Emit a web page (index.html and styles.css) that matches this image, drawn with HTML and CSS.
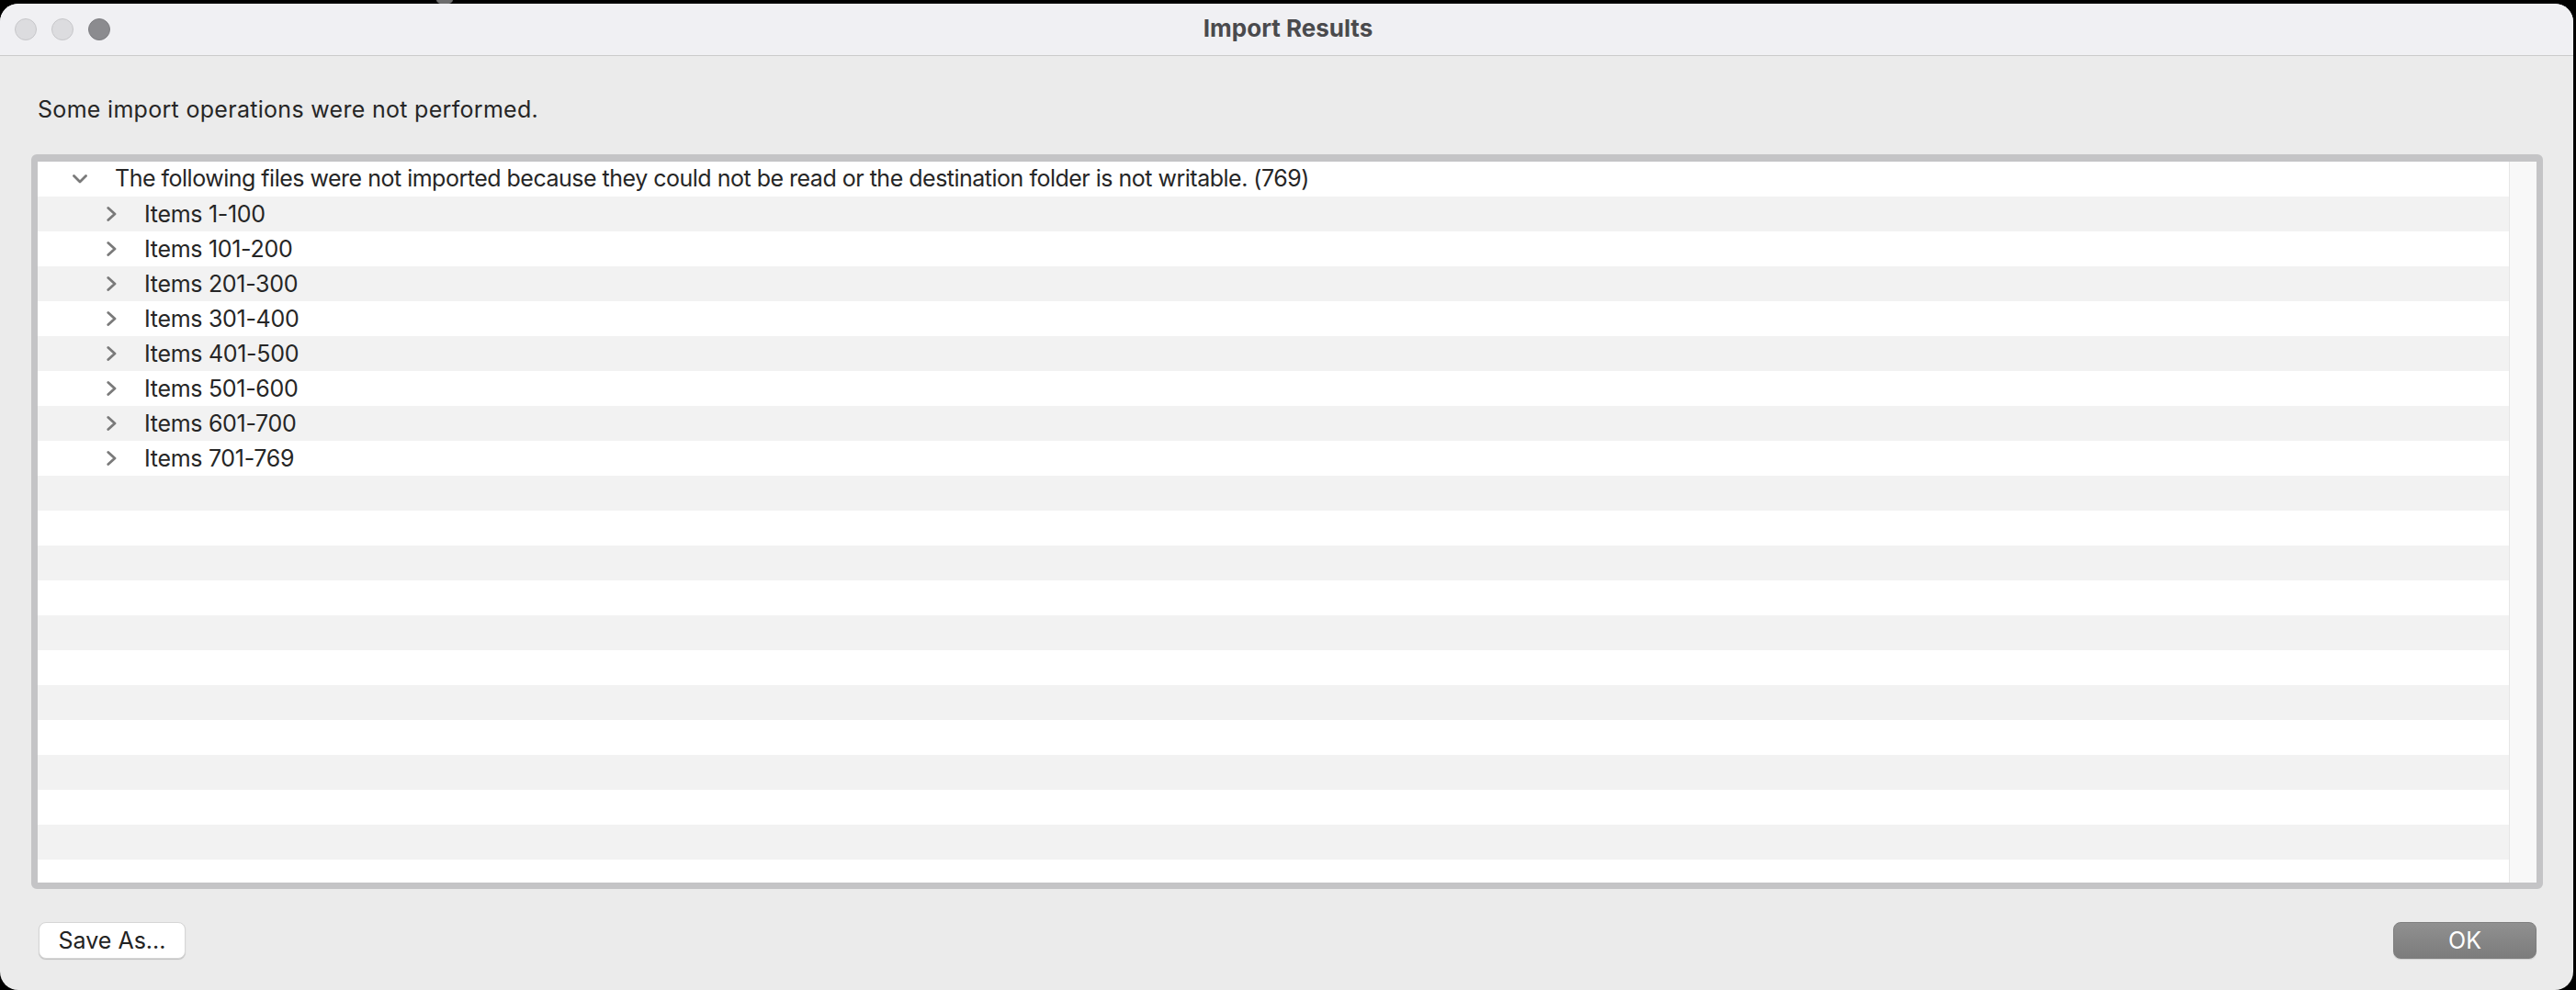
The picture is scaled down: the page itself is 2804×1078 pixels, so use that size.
FILE: index.html
```html
<!DOCTYPE html>
<html lang="en">
<head>
<meta charset="utf-8">
<title>Import Results</title>
<link rel="stylesheet" href="styles.css">
</head>
<body>
<span class="bump"></span>
<div class="window">
  <header class="titlebar">
    <div class="lights">
      <span class="light light-off"></span>
      <span class="light light-off"></span>
      <span class="light light-dark"></span>
    </div>
    <div class="title">Import Results</div>
  </header>
  <main class="content">
    <p class="message">Some import operations were not performed.</p>
    <div class="listbox">
      <div class="rows">
        <div class="row header-row">
          <svg class="chev-down" width="16" height="10" viewBox="0 0 16 10"><path d="M1.5 1.5 L8 8 L14.5 1.5" fill="none" stroke="#7a7a7a" stroke-width="2.8" stroke-linecap="round" stroke-linejoin="round"/></svg>
          <span class="row-text">The following files were not imported because they could not be read or the destination folder is not writable. (769)</span>
        </div>
        <div class="row item-row"><svg class="chev-right" width="11" height="16" viewBox="0 0 11 16"><path d="M1.8 1.5 L9 8 L1.8 14.5" fill="none" stroke="#7a7a7a" stroke-width="2.8" stroke-linecap="round" stroke-linejoin="round"/></svg><span class="row-text">Items 1-100</span></div>
        <div class="row item-row"><svg class="chev-right" width="11" height="16" viewBox="0 0 11 16"><path d="M1.8 1.5 L9 8 L1.8 14.5" fill="none" stroke="#7a7a7a" stroke-width="2.8" stroke-linecap="round" stroke-linejoin="round"/></svg><span class="row-text">Items 101-200</span></div>
        <div class="row item-row"><svg class="chev-right" width="11" height="16" viewBox="0 0 11 16"><path d="M1.8 1.5 L9 8 L1.8 14.5" fill="none" stroke="#7a7a7a" stroke-width="2.8" stroke-linecap="round" stroke-linejoin="round"/></svg><span class="row-text">Items 201-300</span></div>
        <div class="row item-row"><svg class="chev-right" width="11" height="16" viewBox="0 0 11 16"><path d="M1.8 1.5 L9 8 L1.8 14.5" fill="none" stroke="#7a7a7a" stroke-width="2.8" stroke-linecap="round" stroke-linejoin="round"/></svg><span class="row-text">Items 301-400</span></div>
        <div class="row item-row"><svg class="chev-right" width="11" height="16" viewBox="0 0 11 16"><path d="M1.8 1.5 L9 8 L1.8 14.5" fill="none" stroke="#7a7a7a" stroke-width="2.8" stroke-linecap="round" stroke-linejoin="round"/></svg><span class="row-text">Items 401-500</span></div>
        <div class="row item-row"><svg class="chev-right" width="11" height="16" viewBox="0 0 11 16"><path d="M1.8 1.5 L9 8 L1.8 14.5" fill="none" stroke="#7a7a7a" stroke-width="2.8" stroke-linecap="round" stroke-linejoin="round"/></svg><span class="row-text">Items 501-600</span></div>
        <div class="row item-row"><svg class="chev-right" width="11" height="16" viewBox="0 0 11 16"><path d="M1.8 1.5 L9 8 L1.8 14.5" fill="none" stroke="#7a7a7a" stroke-width="2.8" stroke-linecap="round" stroke-linejoin="round"/></svg><span class="row-text">Items 601-700</span></div>
        <div class="row item-row"><svg class="chev-right" width="11" height="16" viewBox="0 0 11 16"><path d="M1.8 1.5 L9 8 L1.8 14.5" fill="none" stroke="#7a7a7a" stroke-width="2.8" stroke-linecap="round" stroke-linejoin="round"/></svg><span class="row-text">Items 701-769</span></div>
        <div class="row"></div>
        <div class="row"></div>
        <div class="row"></div>
        <div class="row"></div>
        <div class="row"></div>
        <div class="row"></div>
        <div class="row"></div>
        <div class="row"></div>
        <div class="row"></div>
        <div class="row"></div>
        <div class="row"></div>
        <div class="row"></div>
      </div>
      <div class="scrolltrack"></div>
    </div>
    <footer class="footer">
      <button class="btn btn-plain">Save As...</button>
      <button class="btn btn-default">OK</button>
    </footer>
  </main>
</div>
</body>
</html>
```
FILE: styles.css
```css
* { box-sizing: border-box; }

html, body {
  margin: 0;
  padding: 0;
  background: #000;
}

body {
  width: 2804px;
  height: 1078px;
  overflow: hidden;
  position: relative;
  font-family: "Inter", "Liberation Sans", sans-serif;
  color: #262626;
}

.bump {
  position: absolute;
  left: 475px;
  top: -5px;
  width: 18px;
  height: 10px;
  border-radius: 50%;
  background: #6d6d6d;
}

.window {
  margin-top: 4px;
  width: 2801px;
  height: 1074px;
  background: #ebebeb;
  border-radius: 20px;
  overflow: hidden;
  display: flex;
  flex-direction: column;
}

.titlebar {
  height: 57px;
  flex: none;
  background: #f0f0f3;
  border-bottom: 1px solid #cbcbcb;
  display: grid;
  grid-template-columns: 1fr;
  align-items: center;
  position: relative;
}

.lights {
  position: absolute;
  left: 16px;
  top: 16px;
  display: flex;
  gap: 16px;
}

.light {
  width: 24px;
  height: 24px;
  border-radius: 50%;
}

.light-off {
  background: #dcdcdf;
  border: 1px solid #c6c6c9;
}

.light-dark {
  background: #8b8b8f;
  border: 1px solid #7e7e82;
}

.title {
  text-align: center;
  font-size: 26px;
  font-weight: 700;
  color: #4a4a4d;
  line-height: 30px;
  padding-bottom: 2px;
  padding-left: 3px;
}

.content {
  flex: 1;
  padding: 43px 33px 34px 34px;
  display: flex;
  flex-direction: column;
}

.message {
  margin: 0 0 34px 0;
  padding-left: 7px;
  font-size: 25px;
  letter-spacing: 0.3px;
  line-height: 30px;
  color: #262626;
}

.listbox {
  height: 800px;
  flex: none;
  border: 7px solid #c4c4c6;
  border-top-width: 8px;
  border-radius: 6px;
  background: #fff;
  display: flex;
  overflow: hidden;
}

.rows {
  flex: 1;
  overflow: hidden;
}

.row {
  height: 38px;
  display: flex;
  align-items: center;
  background: #fff;
}

.row:nth-child(even) {
  background: #f2f2f2;
}

.row-text {
  font-size: 25px;
  line-height: 30px;
  color: #262626;
  white-space: nowrap;
}

.header-row .row-text {
  margin-top: -3px;
  letter-spacing: -0.5px;
}

.item-row .row-text {
  letter-spacing: -0.3px;
}

.chev-down {
  margin-left: 38px;
  margin-right: 30px;
  flex: none;
}

.chev-right {
  margin-left: 75px;
  margin-right: 30px;
  flex: none;
}

.scrolltrack {
  width: 30px;
  flex: none;
  background: #f8f8f8;
  border-left: 1px solid #e6e6e6;
}

.footer {
  margin-top: 36px;
  display: flex;
  justify-content: space-between;
  padding-left: 8px;
  padding-right: 7px;
}

.btn {
  height: 40px;
  border-radius: 8px;
  font-family: "Inter", "Liberation Sans", sans-serif;
  font-size: 25px;
  line-height: 38px;
  padding: 0;
  cursor: default;
}

.btn-plain {
  width: 160px;
  background: #fff;
  color: #222;
  border: 1px solid #d6d6d6;
  box-shadow: 0 1px 1px rgba(0, 0, 0, 0.18);
}

.btn-default {
  width: 156px;
  background: linear-gradient(#909090, #7c7c7c);
  color: #fff;
  border: 1px solid #7e7e7e;
  box-shadow: 0 1px 1px rgba(0, 0, 0, 0.12);
}
```
